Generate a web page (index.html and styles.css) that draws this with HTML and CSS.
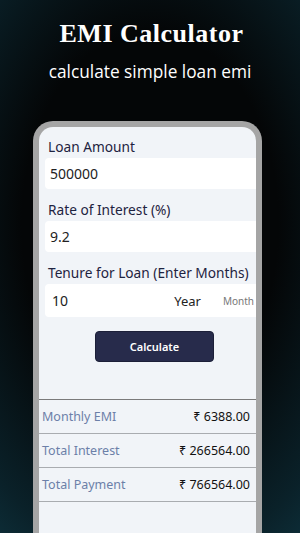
FILE: index.html
```html
<!DOCTYPE html>
<html>
<head>
<meta charset="utf-8">
<link rel="stylesheet" href="styles.css">
</head>
<body>
<div class="page">
  <header class="hero">
    <h1 class="title">EMI Calculator</h1>
    <p class="subtitle">calculate simple loan emi</p>
  </header>
  <div class="phone">
    <div class="screen">
      <div class="form">
        <div class="field">
          <div class="label">Loan Amount</div>
          <div class="input">500000</div>
        </div>
        <div class="field">
          <div class="label">Rate of Interest (%)</div>
          <div class="input">9.2</div>
        </div>
        <div class="field">
          <div class="label">Tenure for Loan (Enter Months)</div>
          <div class="input input-tenure">
            <span class="tenure-value">10</span>
            <span class="unit unit-active">Year</span>
            <span class="unit unit-muted">Month</span>
          </div>
        </div>
        <div class="btn-row">
          <button class="btn">Calculate</button>
        </div>
      </div>
      <div class="results">
        <div class="row"><span class="row-label">Monthly EMI</span><span class="row-value">₹ 6388.00</span></div>
        <div class="row"><span class="row-label">Total Interest</span><span class="row-value">₹ 266564.00</span></div>
        <div class="row"><span class="row-label">Total Payment</span><span class="row-value">₹ 766564.00</span></div>
      </div>
    </div>
  </div>
</div>
</body>
</html>
```
FILE: styles.css
```css
* { box-sizing: border-box; }
html, body {
  margin: 0;
  padding: 0;
  height: 100%;
  overflow: hidden;
}
body {
  background: radial-gradient(ellipse 95% 80% at 50% 42%, #040607 45%, #0a2129 80%, #0f3642 100%);
  font-family: "Noto Sans", "DejaVu Sans", sans-serif;
}
.page {
  width: 300px;
  height: 533px;
  overflow: hidden;
}
.hero {
  text-align: center;
  color: #fff;
  padding-top: 18px;
}
.title {
  margin: 0;
  font-family: "Liberation Serif", "Times New Roman", serif;
  font-weight: bold;
  font-size: 26px;
  letter-spacing: 0.5px;
  line-height: 32px;
  padding-left: 3px;
}
.subtitle {
  margin: 10px 0 0;
  font-family: "Open Sans", sans-serif;
  font-size: 17.3px;
  line-height: 24px;
}
.phone {
  margin: 37px 0 0 33px;
  width: 229px;
  height: 430px;
  border: 6px solid #a5a5a5;
  border-bottom: none;
  border-radius: 20px 20px 0 0;
  background: #f1f4f8;
  overflow: hidden;
}
.screen {
  padding-top: 11px;
}
.form {
  padding-left: 6px;
}
.field {
  display: flex;
  flex-direction: column;
  gap: 2px;
  margin-bottom: 12px;
}
.label {
  padding-left: 3px;
  font-size: 13.7px;
  line-height: 18px;
  color: #1e2340;
}
.input {
  height: 31px;
  background: #fff;
  border-radius: 4px 0 0 4px;
  display: flex;
  align-items: center;
  padding-left: 5px;
  font-size: 14px;
  color: #222;
}
.input-tenure {
  height: 33px;
  padding-left: 7px;
}
.tenure-value { flex: 1; }
.unit-active {
  font-size: 13px;
  color: #222;
  margin-right: 22px;
}
.unit-muted {
  font-size: 10px;
  color: #777;
  margin-right: 2px;
}
.btn-row {
  display: flex;
  justify-content: center;
  padding-top: 2px;
}
.btn {
  width: 119px;
  height: 31px;
  margin-left: 8px;
  background: #272b4b;
  border: 1px solid #1c1f38;
  border-radius: 4px;
  color: #fff;
  font-family: "Noto Sans", sans-serif;
  font-weight: 600;
  font-size: 11px;
}
.results {
  margin-top: 37px;
  border-top: 1px solid #7a7a7a;
}
.row {
  height: 34px;
  border-bottom: 1px solid #a9acb0;
  display: flex;
  align-items: center;
  justify-content: space-between;
  padding: 0 6px 0 3px;
}
.row-label {
  font-size: 12.5px;
  color: #6c80a8;
}
.row-value {
  font-size: 12.5px;
  color: #111;
}
```
